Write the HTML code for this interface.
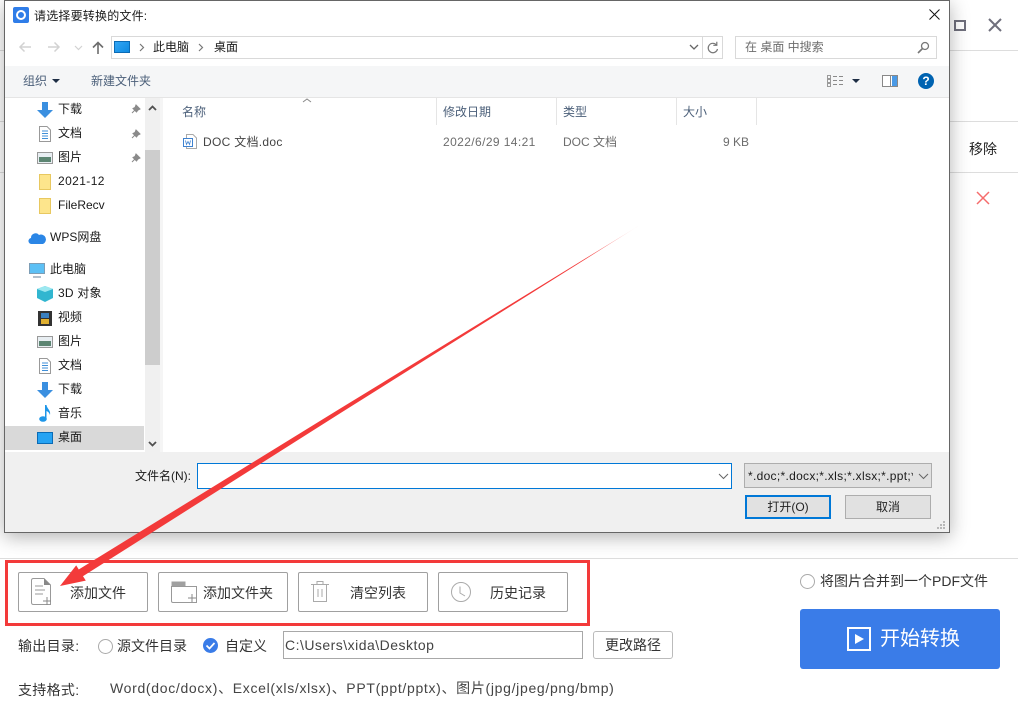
<!DOCTYPE html>
<html lang="zh"><head><meta charset="utf-8"><title>选择文件</title>
<style>
html,body{margin:0;padding:0;background:#fff}
#p{position:relative;width:1018px;height:716px;overflow:hidden;background:#fff;font-family:"Liberation Sans","Noto Sans CJK SC",sans-serif;font-size:12px;color:#222}
.a{position:absolute;box-sizing:border-box}
.t{position:absolute;white-space:nowrap;line-height:20px;height:20px}
svg{position:absolute;display:block;overflow:visible}
.l{position:absolute;height:1px;background:#ddd}
.b{position:absolute;box-sizing:border-box;top:572px;width:130px;height:40px;border:1px solid #a0a0a0;border-radius:2px;background:#fff}
.m{font-size:14px;color:#333}
.n{color:#1a1a1a}
.h{color:#4c607a}
.g{color:#6d6d6d}
</style></head><body><div id="p">

<!-- background lines -->
<div class="l" style="left:0;top:50px;width:1018px"></div>
<div class="l" style="left:0;top:121px;width:1018px"></div>
<div class="l" style="left:0;top:172px;width:1018px"></div>
<div class="l" style="left:0;top:558px;width:1018px"></div>

<!-- window controls -->
<div class="a" style="left:954px;top:20px;width:12px;height:11px;border:2px solid #6f6f7c"></div>
<svg style="left:988px;top:18px" width="14" height="14"><path d="M1 1L13 13M13 1L1 13" stroke="#6f6f7c" stroke-width="2" fill="none"/></svg>
<div class="t m" style="left:969px;top:139px;color:#222">移除</div>
<svg style="left:976px;top:191px" width="14" height="14"><path d="M1 1L13 13M13 1L1 13" stroke="#f56c6c" stroke-width="1.5" fill="none"/></svg>

<!-- dialog -->
<div class="a" style="left:4px;top:0;width:946px;height:533px;background:#fff;border:1px solid #666;box-shadow:0 4px 18px rgba(0,0,0,.3)">
</div>
<div class="a" style="left:5px;top:66px;width:944px;height:31px;background:#f5f6f7"></div>
<div class="a" style="left:5px;top:97px;width:944px;height:1px;background:#e5e5e5"></div>
<div class="a" style="left:5px;top:452px;width:944px;height:80px;background:#f0f0f0"></div>

<!-- title -->
<div class="a" style="left:13px;top:7px;width:16px;height:16px;background:#2f7de8;border-radius:2px"></div>
<div class="a" style="left:16px;top:10px;width:10px;height:10px;border:2.5px solid #fff;border-radius:50%"></div>
<div class="t n" style="left:34px;top:6px;letter-spacing:.2px">请选择要转换的文件:</div>
<svg style="left:929px;top:9px" width="11" height="11"><path d="M.5 .5L10.5 10.5M10.5 .5L.5 10.5" stroke="#111" stroke-width="1" fill="none"/></svg>

<!-- nav row -->
<svg style="left:18px;top:41px" width="14" height="12"><path d="M13 6H2M6.500 1.500L2 6L6.500 10.500" stroke="#d2d2d2" stroke-width="1.500" fill="none"/></svg>
<svg style="left:47px;top:41px" width="14" height="12"><path d="M1 6H12M7.500 1.500L12 6L7.500 10.500" stroke="#d2d2d2" stroke-width="1.500" fill="none"/></svg>
<svg style="left:74px;top:45px" width="9" height="6"><path d="M1 1L4.500 4.500L8 1" stroke="#d2d2d2" stroke-width="1.200" fill="none"/></svg>
<svg style="left:92px;top:41px" width="12" height="13"><path d="M6 13V2M1 6.500L6 1.500L11 6.500" stroke="#6d6d6d" stroke-width="1.600" fill="none"/></svg>
<div class="a" style="left:111px;top:36px;width:612px;height:23px;border:1px solid #d9d9d9;background:#fff"></div>
<div class="a" style="left:702px;top:36px;width:1px;height:23px;background:#d9d9d9"></div>
<div class="a" style="left:114px;top:41px;width:16px;height:12px;background:linear-gradient(135deg,#32a6f5,#0e8ae0);border:1px solid #0b6bb5;border-top-width:1px"></div>
<svg style="left:139px;top:43px" width="6" height="9"><path d="M1 1L4.500 4.500L1 8" stroke="#777" stroke-width="1.200" fill="none"/></svg>
<div class="t n" style="left:153px;top:37px">此电脑</div>
<svg style="left:198px;top:43px" width="6" height="9"><path d="M1 1L4.500 4.500L1 8" stroke="#777" stroke-width="1.200" fill="none"/></svg>
<div class="t n" style="left:214px;top:37px">桌面</div>
<svg style="left:689px;top:44px" width="10" height="7"><path d="M1 1L5 5L9 1" stroke="#666" stroke-width="1.300" fill="none"/></svg>
<svg style="left:707px;top:41px" width="12" height="13"><path d="M9.500 4A4.700 4.700 0 1 0 10.500 8M9.800 .8V4.300H6.300" stroke="#777" stroke-width="1.200" fill="none"/></svg>
<div class="a" style="left:735px;top:36px;width:202px;height:23px;border:1px solid #d9d9d9;background:#fff"></div>
<div class="t g" style="left:745px;top:37px">在 桌面 中搜索</div>
<svg style="left:917px;top:41px" width="13" height="13"><circle cx="8" cy="5" r="3.500" stroke="#777" stroke-width="1.300" fill="none"/><path d="M5.500 7.500L1 12" stroke="#777" stroke-width="1.600"/></svg>

<!-- toolbar -->
<div class="t h" style="left:23px;top:71px">组织</div>
<svg style="left:52px;top:79px" width="9" height="5"><path d="M0 0H8L4 4Z" fill="#1d2d44"/></svg>
<div class="t h" style="left:91px;top:71px">新建文件夹</div>
<svg style="left:827px;top:75px" width="17" height="12"><g fill="none" stroke="#9a9a9a"><rect x=".5" y=".5" width="3" height="3"/><rect x=".5" y="4.500" width="3" height="3"/><rect x=".5" y="8.500" width="3" height="3"/></g><path d="M6 1.500H10M12 1.500H16M6 5.500H10M12 5.500H16M6 9.500H10M12 9.500H16" stroke="#8a8a8a"/></svg>
<svg style="left:852px;top:79px" width="9" height="5"><path d="M0 0H8L4 4Z" fill="#1d2d44"/></svg>
<div class="a" style="left:882px;top:75px;width:16px;height:12px;border:1px solid #888;background:linear-gradient(90deg,#fff 0 7px,#888 7px 8px,#fff 8px 9px,#4a9ae6 9px)"></div>
<div class="a" style="left:918px;top:73px;width:16px;height:16px;background:#0063b1;border-radius:50%;color:#fff;font-weight:bold;text-align:center;line-height:16px;font-size:12px">?</div>

<!-- nav pane -->
<div class="a" style="left:5px;top:426px;width:139px;height:24px;background:#d9d9d9"></div>
<div class="a" style="left:145px;top:98px;width:15px;height:354px;background:#f0f0f0"></div>
<div class="a" style="left:145px;top:150px;width:15px;height:215px;background:#cdcdcd"></div>
<svg style="left:148px;top:105px" width="9" height="6"><path d="M1 5L4.500 1.500L8 5" stroke="#505050" stroke-width="1.800" fill="none"/></svg>
<svg style="left:148px;top:441px" width="9" height="6"><path d="M1 1L4.500 4.500L8 1" stroke="#505050" stroke-width="1.800" fill="none"/></svg>
<div class="a" style="left:160px;top:98px;width:3px;height:354px;background:#f5f5f5"></div>

<!-- nav items -->
<svg style="left:37px;top:102px" width="16" height="16"><path d="M5 0H11V8H16L8 16L0 8H5Z" fill="#3a8fe0"/></svg>
<div class="t n" style="left:58px;top:99px">下载</div>
<svg style="left:39px;top:126px" width="12" height="16"><path d="M.5 .5H8L11.500 4V15.500H.5Z" fill="#fff" stroke="#999"/><path d="M3 5H9M3 7.500H9M3 10H9M3 12.500H9" stroke="#3f8fd8"/></svg>
<div class="t n" style="left:58px;top:123px">文档</div>
<svg style="left:37px;top:152px" width="16" height="12"><rect x=".5" y=".5" width="15" height="11" fill="#e8eef2" stroke="#999"/><rect x="2" y="5" width="12" height="5" fill="#5c8572"/></svg>
<div class="t n" style="left:58px;top:147px">图片</div>
<svg style="left:39px;top:174px" width="12" height="16"><rect x=".5" y=".5" width="11" height="15" fill="#fde58c" stroke="#e8c860"/></svg>
<div class="t n" style="left:58px;top:171px;letter-spacing:.4px">2021-12</div>
<svg style="left:39px;top:198px" width="12" height="16"><rect x=".5" y=".5" width="11" height="15" fill="#fde58c" stroke="#e8c860"/></svg>
<div class="t n" style="left:58px;top:195px">FileRecv</div>
<svg style="left:29px;top:231px" width="16" height="13"><path d="M3 13A3 3 0 0 1 2 7A4.500 4.500 0 0 1 10 4A3.500 3.500 0 0 1 14 13Z" fill="#2b86e6"/></svg>
<div class="t n" style="left:50px;top:227px">WPS网盘</div>
<svg style="left:29px;top:263px" width="16" height="15"><rect x=".5" y=".5" width="15" height="10" fill="#5cc0f5" stroke="#7d9db5"/><path d="M4 14H12" stroke="#9ab" stroke-width="1.500"/></svg>
<div class="t n" style="left:50px;top:259px">此电脑</div>
<svg style="left:37px;top:286px" width="16" height="16"><path d="M8 0L16 3V12L8 16L0 12V3Z" fill="#31b6d0"/><path d="M0 3L8 6L16 3L8 0Z" fill="#9ce8f0"/></svg>
<div class="t n" style="left:58px;top:283px;letter-spacing:.2px">3D 对象</div>
<svg style="left:38px;top:311px" width="14" height="15"><rect width="14" height="15" fill="#333"/><rect x="3" y="2" width="8" height="5" fill="#3a80c0"/><rect x="3" y="8" width="8" height="5" fill="#e0b030"/></svg>
<div class="t n" style="left:58px;top:307px">视频</div>
<svg style="left:37px;top:336px" width="16" height="12"><rect x=".5" y=".5" width="15" height="11" fill="#e8eef2" stroke="#999"/><rect x="2" y="5" width="12" height="5" fill="#5c8572"/></svg>
<div class="t n" style="left:58px;top:331px">图片</div>
<svg style="left:39px;top:358px" width="12" height="16"><path d="M.5 .5H8L11.500 4V15.500H.5Z" fill="#fff" stroke="#999"/><path d="M3 5H9M3 7.500H9M3 10H9M3 12.500H9" stroke="#3f8fd8"/></svg>
<div class="t n" style="left:58px;top:355px">文档</div>
<svg style="left:37px;top:382px" width="16" height="16"><path d="M5 0H11V8H16L8 16L0 8H5Z" fill="#3a8fe0"/></svg>
<div class="t n" style="left:58px;top:379px">下载</div>
<svg style="left:39px;top:405px" width="12" height="17"><ellipse cx="4" cy="14" rx="3.800" ry="2.800" fill="#1e96e8"/><path d="M6 14V0H7.500C8 4 12 5 11 10C10 7 8.500 6.500 7.500 6V14Z" fill="#1e96e8"/></svg>
<div class="t n" style="left:58px;top:403px">音乐</div>
<svg style="left:37px;top:432px" width="16" height="12"><rect x=".5" y=".5" width="15" height="11" fill="#26a3f3" stroke="#0b6bb5"/></svg>
<div class="t n" style="left:58px;top:427px">桌面</div>
<svg style="left:131px;top:104px" width="10" height="10"><path d="M5 1L9 5L7 6L5.500 8L2 4.500L4 3.500ZM3.500 6.500L1 9" fill="#8a8a8a" stroke="#8a8a8a"/></svg>
<svg style="left:131px;top:129px" width="10" height="10"><path d="M5 1L9 5L7 6L5.500 8L2 4.500L4 3.500ZM3.500 6.500L1 9" fill="#8a8a8a" stroke="#8a8a8a"/></svg>
<svg style="left:131px;top:153px" width="10" height="10"><path d="M5 1L9 5L7 6L5.500 8L2 4.500L4 3.500ZM3.500 6.500L1 9" fill="#8a8a8a" stroke="#8a8a8a"/></svg>

<!-- columns -->
<div class="t h" style="left:182px;top:102px">名称</div>
<div class="t h" style="left:443px;top:102px">修改日期</div>
<div class="t h" style="left:563px;top:102px">类型</div>
<div class="t h" style="left:683px;top:102px">大小</div>
<svg style="left:302px;top:98px" width="10" height="5"><path d="M1 4L5 1L9 4" stroke="#888" fill="none"/></svg>
<div class="a" style="left:436px;top:98px;width:1px;height:27px;background:#e5e5e5"></div>
<div class="a" style="left:556px;top:98px;width:1px;height:27px;background:#e5e5e5"></div>
<div class="a" style="left:676px;top:98px;width:1px;height:27px;background:#e5e5e5"></div>
<div class="a" style="left:756px;top:98px;width:1px;height:27px;background:#e5e5e5"></div>

<!-- file row -->
<svg style="left:183px;top:134px" width="15" height="15"><path d="M3.500 .5H10L13.500 4V14.500H3.500Z" fill="#fff" stroke="#aaa"/><rect x=".5" y="4.500" width="9" height="8" fill="#fff" stroke="#3f82d0"/><path d="M2.500 6.500L3.500 10.500L5 7.500L6.500 10.500L7.500 6.500" stroke="#3f82d0" fill="none" stroke-width=".8"/></svg>
<div class="t" style="left:203px;top:132px;color:#444;letter-spacing:.3px">DOC 文档.doc</div>
<div class="t g" style="left:443px;top:132px;letter-spacing:.4px">2022/6/29 14:21</div>
<div class="t g" style="left:563px;top:132px">DOC 文档</div>
<div class="t g" style="left:723px;top:132px">9 KB</div>

<!-- bottom dialog -->
<div class="t n" style="left:135px;top:466px">文件名(N):</div>
<div class="a" style="left:197px;top:463px;width:535px;height:26px;border:1px solid #0078d7;background:#fff"></div>
<svg style="left:718px;top:473px" width="11" height="7"><path d="M1 1L5.500 5.500L10 1" stroke="#666" fill="none"/></svg>
<div class="a" style="left:744px;top:463px;width:188px;height:25px;border:1px solid #adadad;background:#e1e1e1"></div>
<div class="t n" style="left:748px;top:466px;width:165px;overflow:hidden;letter-spacing:.3px">*.doc;*.docx;*.xls;*.xlsx;*.ppt;*</div>
<svg style="left:918px;top:473px" width="11" height="7"><path d="M1 1L5.500 5.500L10 1" stroke="#666" fill="none"/></svg>
<div class="a" style="left:745px;top:495px;width:86px;height:24px;border:2px solid #0078d7;background:#e1e1e1;text-align:center;line-height:20px" >打开(O)</div>
<div class="a" style="left:845px;top:495px;width:86px;height:24px;border:1px solid #adadad;background:#e1e1e1;text-align:center;line-height:22px">取消</div>
<svg style="left:937px;top:521px" width="10" height="10"><g fill="#b8b8b8"><rect x="6" y="0" width="2" height="2"/><rect x="3" y="3" width="2" height="2"/><rect x="6" y="3" width="2" height="2"/><rect x="0" y="6" width="2" height="2"/><rect x="3" y="6" width="2" height="2"/><rect x="6" y="6" width="2" height="2"/></g></svg>

<!-- app buttons -->
<div class="b" style="left:18px"></div>
<div class="b" style="left:158px"></div>
<div class="b" style="left:298px"></div>
<div class="b" style="left:438px"></div>
<svg style="left:31px;top:578px" width="22" height="28"><path d="M.5 2.500Q.5 .5 2.500 .5H13L19.500 7V26.500H2.500Q.5 26.500 .5 24.500Z" fill="#fff" stroke="#999"/><path d="M13 .5L19.500 7H13Z" fill="#888"/><path d="M4 8H12M4 12H14M4 16H12" stroke="#999"/><path d="M12 23H20M16 19V27" stroke="#888" fill="none"/></svg>
<div class="t m" style="left:70px;top:583px">添加文件</div>
<svg style="left:171px;top:581px" width="27" height="23"><rect x=".5" y=".5" width="14" height="5" fill="#a0a0a0"/><path d="M.5 5.500H25.500V21.500H2Q.5 21.500 .5 20Z" fill="#fff" stroke="#999"/><path d="M17 17H25M21 13V21" stroke="#888" fill="#fff"/></svg>
<div class="t m" style="left:203px;top:583px">添加文件夹</div>
<svg style="left:311px;top:581px" width="18" height="22"><path d="M0 3.500H18M6 3V.5H12V3" stroke="#aaa" fill="none"/><path d="M2.500 4V20.500H15.500V4" stroke="#aaa" fill="none"/><path d="M7 8V16M11 8V16" stroke="#aaa"/></svg>
<div class="t m" style="left:350px;top:583px">清空列表</div>
<svg style="left:451px;top:582px" width="20" height="20"><circle cx="10" cy="10" r="9.500" fill="none" stroke="#aaa"/><path d="M9 4.500V11L14 14" stroke="#aaa" fill="none"/></svg>
<div class="t m" style="left:490px;top:583px">历史记录</div>

<!-- red box -->
<div class="a" style="left:5px;top:560px;width:585px;height:66px;border:3px solid #f33a3a"></div>

<!-- output row -->
<div class="t m" style="left:18px;top:636px;letter-spacing:.3px">输出目录:</div>
<div class="a" style="left:98px;top:639px;width:15px;height:15px;border:1px solid #aaa;border-radius:50%;background:#fff"></div>
<div class="t m" style="left:117px;top:636px">源文件目录</div>
<svg style="left:203px;top:638px" width="15" height="15"><circle cx="7.500" cy="7.500" r="7.500" fill="#3a7ce8"/><path d="M3.500 7.500L6.500 10.500L11.500 5" stroke="#fff" stroke-width="1.700" fill="none"/></svg>
<div class="t m" style="left:225px;top:636px">自定义</div>
<div class="a" style="left:283px;top:631px;width:300px;height:28px;border:1px solid #a8a8a8;background:#fff"></div>
<div class="t" style="left:285px;top:635px;font-size:14px;letter-spacing:.48px;color:#444">C:\Users\xida\Desktop</div>
<div class="a" style="left:593px;top:631px;width:80px;height:28px;border:1px solid #bbb;border-radius:3px;background:#fff;text-align:center;line-height:26px;font-size:14px;color:#333">更改路径</div>
<div class="t m" style="left:18px;top:680px;letter-spacing:.3px">支持格式:</div>
<div class="t" style="left:110px;top:678px;font-size:14px;color:#444;letter-spacing:.68px">Word(doc/docx)、Excel(xls/xlsx)、PPT(ppt/pptx)、图片(jpg/jpeg/png/bmp)</div>

<!-- right panel -->
<div class="a" style="left:800px;top:574px;width:15px;height:15px;border:1px solid #aaa;border-radius:50%;background:#fff"></div>
<div class="t m" style="left:820px;top:571px">将图片合并到一个PDF文件</div>
<div class="a" style="left:800px;top:609px;width:200px;height:60px;background:#3a7ce8;border-radius:3px"></div>
<div class="a" style="left:847px;top:627px;width:24px;height:24px;border:2px solid #fff"></div>
<svg style="left:855px;top:634px" width="9" height="10"><path d="M0 0L9 5L0 10Z" fill="#fff"/></svg>
<div class="t" style="left:880px;top:629px;font-size:20px;color:#fff">开始转换</div>

<!-- arrow -->
<svg style="left:0;top:0" width="1018" height="716"><defs><linearGradient id="g" gradientUnits="userSpaceOnUse" x1="640" y1="225" x2="585" y2="259"><stop offset="0" stop-color="#f33a3a" stop-opacity=".1"/><stop offset="1" stop-color="#f33a3a"/></linearGradient></defs>
<path d="M640 225L341 412.700L82.100 576.800L77.900 570L339 409.300Z" fill="url(#g)"/>
<path d="M60 586L76.200 565.400L85.800 580.600Z" fill="#f33a3a"/></svg>

</div></body></html>
